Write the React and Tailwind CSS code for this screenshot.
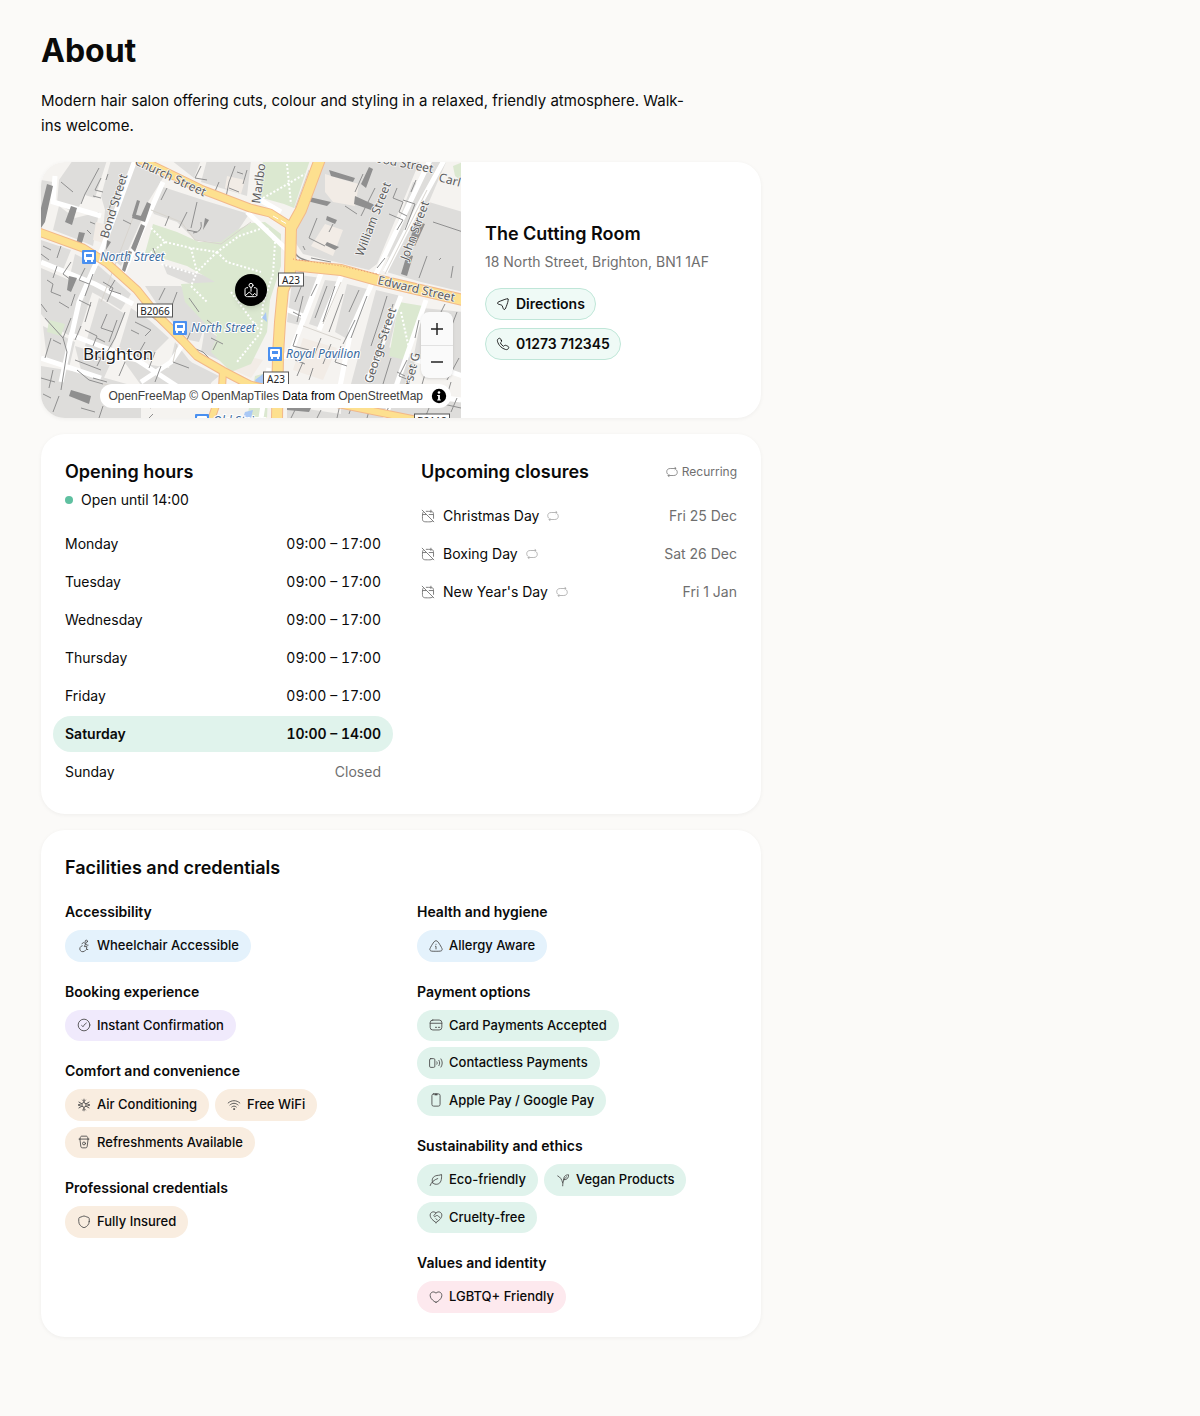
import React from "react";

const ICONS = {
  directions: (
    <path d="M20.6 3.4c-1-1-3.600 0-8.600 1.900-5.800 2.100-9.400 3.500-9.500 5-.1 1.600 2 2.100 4.900 2.900 1.500.4 2.300.7 2.800 1.200s.8 1.300 1.300 2.900c.9 2.800 1.500 4.400 2.900 4.200 1.600-.2 2.800-3.800 4.600-9 1.700-4.800 2.600-8.100 1.600-9.100Z" />
  ),
  phone: (
    <path d="M9.200 5.900 8.600 4.700c-.4-.9-.6-1.400-.9-1.700-.4-.4-1-.7-1.600-.8-.5 0-.9.1-1.700.5C2.700 3.600 2 5.300 2.500 7.300c.9 3.500 2.800 6.700 5.400 9.300 2.400 2.300 5.400 4 8.700 4.900 2 .5 3.800-.2 4.700-1.900.4-.8.5-1.200.5-1.700-.1-.6-.4-1.200-.8-1.600-.4-.3-.9-.5-1.700-.9l-1.200-.6c-1.300-.5-2-.8-2.700-.6-.7.1-1.200.7-2.200 1.800-2.600-1.300-4.500-3.300-5.700-5.900 1.100-.9 1.700-1.400 1.900-2.100.1-.7-.1-1.100-.2-2.100Z" />
  ),
  recurring: (
    <>
      <path d="M18 2.500 20 5l-2 2" />
      <path d="M19 5H8.500C4 5 1.500 7.500 1.500 11.500c0 2.300.8 4 2.500 5.300" />
      <path d="M6 21.500 4 19l2-2" />
      <path d="M5 19h10.500c4.500 0 7-2.500 7-6.500 0-2.300-.8-4-2.500-5.300" />
    </>
  ),
  calendarOff: (
    <>
      <path d="M17 2v4M2 2l20 20" />
      <path d="M9 4h4c4 0 6 0 7.200 1.200C21.500 6.500 21.500 8.500 21.500 12v4M20 20.500C18.500 22 16.500 22 13 22h-2c-4 0-6 0-7.300-1.300S2.500 17.500 2.500 13.500v-1c0-3.500 0-5.600 1.200-7" />
      <path d="M3 9.500h5.500M14 9.500h7" />
    </>
  ),
  wheelchair: (
    <>
      <circle cx="16" cy="4" r="2" />
      <path d="m8.500 8 3-2 3.500 2-2.500 5H17l-1 5h2.500M15 8l1.500 2.500H19" />
      <path d="M9 11.500a5.300 5.300 0 1 0 5.500 8" />
    </>
  ),
  check: (
    <>
      <circle cx="12" cy="12" r="10" />
      <path d="M8 12.800s1.600.9 2.400 2.200c0 0 2.400-4.800 5.600-6.500" />
    </>
  ),
  snow: (
    <>
      <path d="M12 2v6M12 16v6M3.300 7l5.200 3M15.500 14l5.200 3M20.700 7l-5.200 3M8.500 14l-5.200 3" />
      <path d="m9.500 3.500 2.500 2.500 2.500-2.500M9.500 20.500 12 18l2.500 2.500M2.500 11.500 6 10.500M21.500 12.500l-3.500 1M2.500 12.500l3.500 1M21.500 11.500l-3.500-1" />
      <path d="m12 8 3.500 2v4L12 16l-3.500-2v-4Z" />
    </>
  ),
  wifi: (
    <>
      <path d="M2 8.500c6-5.300 14-5.300 20 0M5 12c4.500-4 9.500-4 14 0M8 15.500c2.700-2.300 5.300-2.300 8 0" />
      <circle cx="12" cy="19" r="1" />
    </>
  ),
  cup: (
    <>
      <path d="m5 7 1.500 12c.3 2.300 1 3 3 3h5c2 0 2.700-.7 3-3L19 7" />
      <path d="M3.500 7h17M5 7l.7-2.700C6.200 2.500 7 2 8.500 2h7c1.500 0 2.300.5 2.800 2.300L19 7" />
      <circle cx="12" cy="14.500" r="2.500" />
    </>
  ),
  shield: (
    <path d="M21 11V8.500c0-2 0-3-.5-3.600-.5-.7-1.500-1-3.400-1.500a20 20 0 0 1-2.900-1.100c-2-.8-2.400-.8-4.400 0-.8.4-1.800.8-2.900 1.100-1.900.5-2.900.8-3.400 1.500C3 5.500 3 6.500 3 8.500V11c0 6 4.700 9 7.400 10.200 1.300.6 1.900.6 3.200 0C16.300 20 21 17 21 11Z" />
  ),
  alert: (
    <>
      <path d="M5.500 9.500C8.200 5.200 9.600 3 12 3s3.800 2.200 6.500 6.500l1.500 2.500c2.200 3.800 3.200 5.700 2.200 7.300S18.700 21 13.500 21h-3c-5.200 0-7.700 0-8.700-1.700S1.800 15.800 4 12Z" />
      <path d="M12 17v-4.500h-1M12 9v.200" />
    </>
  ),
  card: (
    <>
      <rect x="2" y="3.500" width="20" height="17" rx="4.500" />
      <path d="M2 9h20M11 16h2M16 16h2.500" />
    </>
  ),
  contactless: (
    <>
      <rect x="1" y="4.500" width="9" height="15" rx="2" />
      <path d="M13.500 10c.7 1.300.7 2.700 0 4M17 7.500c1.800 3 1.800 6 0 9M20.500 5c3 4.500 3 9.500 0 14" />
    </>
  ),
  mobile: (
    <>
      <rect x="5" y="1.500" width="14" height="21" rx="3" />
      <path d="M9.500 2.500h5" strokeWidth="3" strokeLinecap="butt" />
    </>
  ),
  leaf: (
    <>
      <path d="M2 21.500c2-5.500 6-9.500 13-12" />
      <path d="M6.500 17C4.500 13 5 7.500 11 5c3.500-1.500 7-.5 10.500-2.500C22 11 20.500 17.500 15 19c-3.500.9-6.500 0-8.500-2Z" />
    </>
  ),
  sprout: (
    <>
      <path d="M11.500 22c0-6 1-11.500 6.500-15.500M11.500 17C10 11 7.500 7 3 5" />
      <path d="M13.500 11.500c-1-4.500 2-8.500 8-8.500.5 5-2.500 9-8 8.500Z" />
    </>
  ),
  handHeart: (
    <>
      <path d="M12 21.500C7 18 2 14.200 2 8.800 2 3.800 8 1 12 5.300 16 1 22 3.800 22 8.800c0 5.400-5 9.200-10 12.700Z" />
      <path d="m12 5.300-3.500 4c-.8 1 .9 2.700 2.200 1.700L13 9.500c2.500-.5 4 1.500 5.500 3.500M14 17l-2-2" />
    </>
  ),
  heart: (
    <path d="M12 21c-1 0-1.900-.6-3.300-1.600C5 16.600 2 13.500 2 9.300 2 3.700 8 1.200 12 5.500c4-4.300 10-1.800 10 3.800 0 4.200-3 7.300-6.700 10.100C13.900 20.400 13 21 12 21Z" />
  ),
  mapPin: (
    <>
      <path d="M12 14V8" />
      <circle cx="12" cy="5" r="3" />
      <path d="M7 8.500c-3 0-4 .8-4 3V18c0 3 1 4 4 4h10c3 0 4-1 4-4v-6.500c0-2.200-1-3-4-3M3.500 20.500l6-5.500 5 5 3-3 3 3" />
    </>
  ),
};

function Icon({ name, className }) {
  return (
    <svg
      viewBox="0 0 24 24"
      fill="none"
      stroke="currentColor"
      strokeWidth="1.5"
      strokeLinecap="round"
      strokeLinejoin="round"
      aria-hidden="true"
      className={`shrink-0 ${className}`}
    >
      {ICONS[name]}
    </svg>
  );
}

const HOURS = [
  { day: "Monday", time: "09:00 – 17:00" },
  { day: "Tuesday", time: "09:00 – 17:00" },
  { day: "Wednesday", time: "09:00 – 17:00" },
  { day: "Thursday", time: "09:00 – 17:00" },
  { day: "Friday", time: "09:00 – 17:00" },
  { day: "Saturday", time: "10:00 – 14:00", today: true },
  { day: "Sunday", time: "Closed", closed: true },
];

const CLOSURES = [
  { name: "Christmas Day", date: "Fri 25 Dec" },
  { name: "Boxing Day", date: "Sat 26 Dec" },
  { name: "New Year's Day", date: "Fri 1 Jan" },
];

const TONES = {
  blue: "bg-[#e4f2fc]",
  purple: "bg-[#f0eafc]",
  sand: "bg-[#f9ede0]",
  green: "bg-[#e0f3ec]",
  pink: "bg-[#fde9ee]",
};

const FACILITIES = [
  [
    {
      title: "Accessibility",
      tone: "blue",
      items: [["wheelchair", "Wheelchair Accessible"]],
    },
    {
      title: "Booking experience",
      tone: "purple",
      items: [["check", "Instant Confirmation"]],
    },
    {
      title: "Comfort and convenience",
      tone: "sand",
      items: [
        ["snow", "Air Conditioning"],
        ["wifi", "Free WiFi"],
        ["cup", "Refreshments Available"],
      ],
    },
    {
      title: "Professional credentials",
      tone: "sand",
      items: [["shield", "Fully Insured"]],
    },
  ],
  [
    {
      title: "Health and hygiene",
      tone: "blue",
      items: [["alert", "Allergy Aware"]],
    },
    {
      title: "Payment options",
      tone: "green",
      items: [
        ["card", "Card Payments Accepted"],
        ["contactless", "Contactless Payments"],
        ["mobile", "Apple Pay / Google Pay"],
      ],
    },
    {
      title: "Sustainability and ethics",
      tone: "green",
      items: [
        ["leaf", "Eco-friendly"],
        ["sprout", "Vegan Products"],
        ["handHeart", "Cruelty-free"],
      ],
    },
    {
      title: "Values and identity",
      tone: "pink",
      items: [["heart", "LGBTQ+ Friendly"]],
    },
  ],
];

function BusStop({ x, y, label }) {
  return (
    <g>
      <rect x={x - 7} y={y - 7} width="14" height="14" rx="1" fill="#4a90f0" />
      <rect x={x - 5} y={y - 5} width="10" height="8" rx="1" fill="#fff" />
      <rect x={x - 3} y={y - 3} width="6" height="3" fill="#4a90f0" />
      <path d={`M${x - 4} ${y + 4}h2M${x + 2} ${y + 4}h2`} stroke="#fff" strokeWidth="2" />
      <text
        x={x + 11}
        y={y + 4}
        fontSize="12"
        fontStyle="italic"
        fill="#3a6a9e"
        stroke="#fff"
        strokeWidth="2"
        paintOrder="stroke"
      >
        {label}
      </text>
    </g>
  );
}

function RoadShield({ x, y, w, label }) {
  return (
    <g>
      <rect x={x - w / 2} y={y - 7} width={w} height="13" fill="#fff" stroke="#555" />
      <text x={x} y={y + 4} fontSize="10" textAnchor="middle" fill="#222">
        {label}
      </text>
    </g>
  );
}

const YELLOW_ROADS = [
  { d: "M96-4 162 28 209 46 229 51 251 65", w: 7 },
  { d: "M-2 70 42 86 66 101 96 128 116 153 142 179 156 194 182 209 209 223 237 230", w: 7 },
  { d: "M182 209 181 226 170 258", w: 6 },
  { d: "M250 103 300 108 336 118 422 138", w: 10 },
  { d: "M240 232 302 243 376 258", w: 6 },
  { d: "M279-3 260 48 250 66 249 112 242 128 239 160 237 193 236 258", w: 10 },
];

const STREET_LABELS = [
  { text: "Church Street", x: 93, y: 2, r: 25 },
  { text: "Bond Street", x: 67, y: 77, r: -73 },
  { text: "Marlbo", x: 219, y: 42, r: -82 },
  { text: "Edward Street", x: 336, y: 122, r: 13 },
  { text: "William Street", x: 322, y: 95, r: -69 },
  { text: "John Street", x: 367, y: 99, r: -70 },
  { text: "George Street", x: 331, y: 222, r: -72 },
  { text: "Dorset G", x: 367, y: 240, r: -76 },
  { text: "ood Street", x: 334, y: 0, r: 11 },
  { text: "Carl", x: 397, y: 19, r: 15 },
];

function StreetMap() {
  return (
    <svg
      viewBox="0 0 420 256"
      preserveAspectRatio="xMidYMid slice"
      role="img"
      aria-label="Map of Brighton"
      fontFamily='"Noto Sans", sans-serif'
      className="block h-full w-full"
    >
      <rect width="420" height="256" fill="#f5f3f0" />

      {/* city blocks */}
      <path
        fill="#dedddb"
        d="M0 18 12 20 0 66ZM18 18 32-2H66L54 36 44 33 34 52 16 41ZM70-2H92L122 16 107 40 104 50 80 104 60 88 64 48 60 34ZM18 44 34 56 58 50 52 84 38 78 12 68ZM111 48 119 24 165 39 208 52 196 70 180 81 154 78 136 60 113 52ZM130-2H160L153 16ZM166-2H210L206 34 160 20ZM274 4 294-4H380L336 102 328 108 262 92 254 80 259 50 270 32ZM280 34 306 48 294 84 262 74 268 46ZM389-4 406-2 388 40 422 50V130L380 120 342 109ZM372 20 386 24 354 96 344 94ZM0 78 30 88 22 108 0 100ZM34 92 58 104 90 132 80 148 58 134 28 118ZM0 106 52 128 36 178 8 162 0 152ZM58 136 84 152 68 192 44 184ZM90 146 108 158 128 176 108 196 76 192ZM2 164 34 180 28 206 6 198ZM34 184 72 196 62 218 40 208ZM0 204 50 212 100 226V258H0ZM82 198 128 206 134 180 148 198 172 218 160 238 102 226ZM136 188 150 200 178 214 166 224 136 206ZM104 124 140 124 166 158 158 180 148 178 116 142ZM164 166 190 184 182 200 160 190ZM122 102 180 118 178 134 126 112ZM252 112 280 116 262 164 246 160ZM284 118 300 120 280 166 268 162ZM306 122 330 128 308 178 294 170ZM335 128 360 134 338 230 310 222ZM382 146 422 150V214L372 198ZM344 184 376 194 358 240 336 230ZM246 244 300 252V258H246ZM300 234 422 240V258H300Z"
      />
      <path
        fill="#f2ece6"
        d="M284 12 303 18 318 22 314 44 292 40 284 30ZM55 60 70 64 66 82 52 78ZM284 62 302 68 292 94 270 84ZM186 14 204 18 200 32 184 26ZM262 176 296 186 282 218 252 208ZM190 190 222 198 210 216 188 206Z"
      />

      {/* parks */}
      <g fill="#dbe8d0">
        <path d="M112 62 136 70 158 80 180 80 196 68 210 61 224 60 240 72 240 104 229 138 226 170 210 202 190 210 170 190 176 174 144 140 140 122 174 120 146 104 104 91Z" />
        <path d="M222-2H269L253 46 243 42 218 35Z" />
        <path d="M358 140 382 144 364 198 348 194Z" />
        <path d="M8 158 24 162 20 174 6 170ZM412 4 422 0V20L414 14ZM214 214 228 210 226 256 206 256Z" />
      </g>
      <path
        fill="none"
        stroke="#fff"
        strokeWidth="2"
        strokeDasharray="2 2"
        d="M110 66 124 80 150 86 176 90 198 74 222 66M124 80 108 92M176 90 186 100 220 110M150 86 156 110 150 124 166 140M176 90 154 112 120 102M222 36 264 12M246 2 250 42M226 66 234 80 232 112 222 142 220 170 196 200M190 130 218 168M360 150 370 196"
      />
      <path fill="#a9c8f5" d="M221 156 225 150 226 160ZM214 218 222 212 224 220 216 224ZM204 250 212 248 210 256H202Z" />

      {/* side streets */}
      <g fill="none" stroke="#fff" strokeWidth="5">
        <path d="M94-2 60 90 38 140 20 220M122 20 80 116M14 14 12 40 60 54" />
        <path d="M390-4 336 110 310 168 296 240M422-36 380 40 344 110M302 110 278 168M282 106 250 190 240 196" />
        <path d="M385 138 344 256M360 134 326 220M242 146 262 154" />
        <path d="M0 100 54 122 92 142M28 172 96 198 160 240M0 196 60 216" />
        <path d="M206 50 246 88 246 128M216 36 240 50" />
        <path d="M142 182 130 200 100 220M228 206 220 256M370 196 422 214M330 226 420 238" />
      </g>
      <g fill="none" stroke="#d8d4ce" strokeWidth="1">
        <path d="M110 48 140 60 154 78 180 82 210 60M98 40 60 140M62 222 160 238M246 66 250 96 270 104 336 112M136 182 132 200" />
        <path d="M262 164 300 178M254 46 268 8M344 112 386 28M300 120 282 162" />
      </g>

      {/* building shading */}
      <g fill="#8f8f8f">
        <path d="M6 22 12 24 4 60 0 66V46ZM30 44 36 46 31 63 24 60ZM38 70 44 71 40 84 35 82ZM106 40 110 42 104 60 98 58ZM92 52 100 54 98 58 91 56ZM100 62 104 64 94 90 90 86ZM86 88 91 90 84 110 81 108ZM96 38 99 39 94 56 91 54ZM66 78 70 80 65 88ZM164 56 168 58 162 68ZM328 5 332 7 325 26 320 22ZM314 34 336 44 330 48 313 42ZM264 34 290 40 286 44 262 38ZM286 54 296 58 294 62 285 58ZM286 80 298 85 294 88 284 83ZM288 8 314 16 312 20 290 14ZM375 59 384 62 374 84 368 80ZM366 92 372 94 366 114 360 112ZM28 114 36 116 30 130 26 128ZM30 228 50 234 48 242 28 234ZM68 230 92 238 90 244 66 236ZM246 244 270 246 268 250 246 248Z" />
      </g>
      <g fill="none" stroke="#8f8f8f" strokeWidth="1">
        <path d="M58 6 44 32 40 42M67 12 65 18M60 16 54 28 62 30M52 34 60 36M20 20 32 30M49 60 54 62M46 68 50 72M72 34 68 48M79 20 77 30M82 58 90 62M20 84 16 96M2 84 10 88" />
        <path d="M126 26 120 38M146 50 138 66M156 40 150 66M178 20 172 34M194 4 188 20 184 40M206 8 202 22M160 4 154 16 166 18M128 54 124 64M112 86 115 94M196 10 202 12M188 26 198 30" />
        <path d="M270 8 266 20M322 12 314 30M334 26 320 54M276 56 268 76 284 84M292 62 288 70M304 44 316 52M262 84 264 88M270 96 290 100M330 60 318 92M344 96 336 106" />
        <path d="M356 26 352 36 362 40 358 50 366 54M348 52 362 58 356 68M375 18 370 30M362 38 374 42 364 68M386 94 378 116M392 60 422 70M400 96 398 98M412 104 410 116" />
        <path d="M0 92 8 98M6 118 12 122 10 130 20 134M16 104 12 116M30 100 22 112 30 118M44 106 38 118 48 122M52 112 44 134M62 120 72 126 66 140M74 118 68 128 80 132M34 132 30 144M38 138 50 144M18 140 28 146M50 140 44 160M30 156 22 176" />
        <path d="M0 142 6 150M4 156 22 176 26 190 20 228M10 176 4 196M12 178 20 182M40 164 34 178M44 168 56 174 52 184M66 152 60 166 72 170M76 158 68 180M84 150 74 176 66 190M94 160 110 168 104 174M90 168 98 172M104 180 96 194 112 198M114 190 108 206" />
        <path d="M56 176 64 180M48 192 60 196 56 204M74 188 88 192M34 198 60 208M84 200 78 214M36 208 48 218 62 222M12 208 8 226M18 234 12 250M52 216 66 220M0 216 14 220M2 232 10 236M62 244 58 256M40 246 54 250M96 240 110 246M112 252 108 256M120 204 114 220" />
        <path d="M138 180 162 190 178 206M132 200 148 206M124 126 118 138M136 130 130 146M148 136 158 150M152 164 146 178M166 158 176 166M170 176 182 182M176 180 172 188M108 152 122 164M124 142 132 150" />
        <path d="M262 120 254 140M276 122 270 134M252 150 260 154M262 134 256 160M286 124 274 156M294 124 282 160M302 132 288 170M318 128 308 150M326 134 310 176M256 172 252 184 268 188M280 176 272 196M290 182 282 202M262 200 256 214M272 206 268 218M254 198 264 202M300 184 294 200 306 204M314 158 302 182" />
        <path d="M346 134 338 160 330 184M352 142 336 196M342 174 328 216M366 198 358 214 368 218M350 196 342 222M374 202 366 226M356 210 364 214M378 158 374 176M404 142 398 154M416 150 406 176M404 184 398 200M418 196 406 218M384 212 380 226M410 220 404 240M394 224 390 238M416 236 410 250" />
        <path d="M300 238 296 256M312 240 308 252M330 242 326 256M348 244 344 254M254 248 250 256M280 248 276 256M388 246 384 256M402 242 420 246" />
        <path d="M160 60Q162 70 152 71M146 68 156 70" />
      </g>
      <path d="M260 48 252 78Q250 94 264 98L276 102" fill="none" stroke="#8a8a8a" strokeWidth="1.500" />

      {/* main roads */}
      <g fill="none" strokeLinejoin="round">
        {YELLOW_ROADS.map((road) => (
          <path key={road.d} d={road.d} stroke="#f2b88a" strokeWidth={road.w + 2} />
        ))}
        {YELLOW_ROADS.map((road) => (
          <path key={road.d} d={road.d} stroke="#fde08f" strokeWidth={road.w} />
        ))}
        <path d="M232 54 246 62" stroke="#fff" strokeWidth="1" strokeDasharray="6 3" />
        <path d="M252 97 300 104 336 112" stroke="#e89a6a" strokeWidth="1" strokeDasharray="1 2" />
      </g>

      {/* labels */}
      <g fill="#5d5d5d" stroke="#f6f6f6" strokeWidth="1.500" paintOrder="stroke" fontSize="12">
        {STREET_LABELS.map((label) => (
          <text key={label.text} transform={`translate(${label.x} ${label.y}) rotate(${label.r})`}>
            {label.text}
          </text>
        ))}
      </g>
      <BusStop x={48} y={95} label="North Street" />
      <BusStop x={139} y={166} label="North Street" />
      <BusStop x={234} y={192} label="Royal Pavilion" />
      <BusStop x={161} y={259} label="Old Steine" />
      <RoadShield x={250} y={118} w={25} label="A23" />
      <RoadShield x={114} y={149} w={35} label="B2066" />
      <RoadShield x={235} y={217} w={25} label="A23" />
      <RoadShield x={391} y={259} w={35} label="B2118" />
      <text x="42" y="198" fontSize="17" fill="#1a1a1a" stroke="#fff" strokeWidth="2" paintOrder="stroke">
        Brighton
      </text>
    </svg>
  );
}

function MapPanel() {
  return (
    <div className="relative h-64 overflow-hidden">
      <StreetMap />
      <div className="absolute inset-0 flex items-center justify-center">
        <span className="flex h-8 w-8 items-center justify-center rounded-full bg-black text-white shadow-md">
          <Icon name="mapPin" className="h-4 w-4" />
        </span>
      </div>
      <div className="absolute right-2 bottom-10 flex flex-col overflow-hidden rounded-lg bg-[#fafafa] shadow-sm">
        <button aria-label="Zoom in" className="flex h-[33px] w-8 items-center justify-center text-[#222]">
          <svg viewBox="0 0 12 12" className="h-3 w-3" stroke="currentColor" strokeWidth="1.500">
            <path d="M0 6h12M6 0v12" />
          </svg>
        </button>
        <button
          aria-label="Zoom out"
          className="flex h-[33px] w-8 items-center justify-center border-t border-[#e2e2e2] text-[#222]"
        >
          <svg viewBox="0 0 12 12" className="h-3 w-3" stroke="currentColor" strokeWidth="1.500">
            <path d="M0 6h12" />
          </svg>
        </button>
      </div>
      <div className="absolute right-[10px] bottom-[10px] flex h-6 items-center gap-1 rounded-xl bg-white pl-2 font-['Liberation_Sans',sans-serif] text-xs whitespace-nowrap text-black">
        <p>
          <a href="#openfreemap" className="text-[#404040]">OpenFreeMap</a>{" "}
          <a href="#openmaptiles" className="text-[#404040]">© OpenMapTiles</a> Data from{" "}
          <a href="#openstreetmap" className="text-[#404040]">OpenStreetMap</a>
        </p>
        <button aria-label="Toggle attribution" className="flex h-6 w-6 items-center justify-center">
          <svg viewBox="0 0 20 20" className="h-[18px] w-[18px]">
            <circle cx="10" cy="10" r="8" />
            <circle cx="10" cy="6" r="1.400" fill="#fff" />
            <path d="M8 9h3v5h1v1H8v-1h1v-4H8Z" fill="#fff" />
          </svg>
        </button>
      </div>
    </div>
  );
}

function Card({ className = "", children }) {
  return (
    <section className={`rounded-3xl bg-white shadow-[0_1px_4px_rgba(0,0,0,0.05)] ${className}`}>
      {children}
    </section>
  );
}

function CardTitle({ children }) {
  return <h2 className="text-[18px] leading-7 font-semibold">{children}</h2>;
}

function ContactLink({ icon, href, children }) {
  return (
    <a
      href={href}
      className="flex h-8 items-center gap-1.5 rounded-full border border-[#bfe6d8] bg-[#effaf6] px-2.5 text-[14px] leading-5 font-semibold"
    >
      <Icon name={icon} className="h-[14px] w-[14px]" />
      {children}
    </a>
  );
}

function OpeningHours() {
  return (
    <div>
      <CardTitle>Opening hours</CardTitle>
      <p className="mt-1 flex items-center gap-2 text-[14px] leading-5">
        <span className="h-2 w-2 rounded-full bg-[#5fc0a0]" />
        Open until 14:00
      </p>
      <ul className="mt-4 flex flex-col gap-0.5">
        {HOURS.map((row) => (
          <li
            key={row.day}
            className={`-mx-3 flex h-9 items-center justify-between rounded-full px-3 text-[14px] leading-5 ${
              row.today ? "bg-[#e0f3ec] font-semibold" : ""
            }`}
          >
            <span>{row.day}</span>
            <span className={row.closed ? "text-[#6f6f6f]" : "tabular-nums"}>{row.time}</span>
          </li>
        ))}
      </ul>
    </div>
  );
}

function UpcomingClosures() {
  return (
    <div>
      <div className="flex items-center justify-between">
        <CardTitle>Upcoming closures</CardTitle>
        <span className="flex items-center gap-1 text-xs text-[#6f6f6f]">
          <Icon name="recurring" className="h-3 w-3" />
          Recurring
        </span>
      </div>
      <ul className="mt-3 flex flex-col gap-0.5">
        {CLOSURES.map((row) => (
          <li key={row.name} className="flex h-9 items-center text-[14px] leading-5">
            <Icon name="calendarOff" className="mr-2 h-[14px] w-[14px] text-[#6f6f6f]" />
            {row.name}
            <Icon name="recurring" className="ml-2 h-3 w-3 text-[#a0a0a0]" />
            <span className="ml-auto text-[#6f6f6f]">{row.date}</span>
          </li>
        ))}
      </ul>
    </div>
  );
}

function FacilityGroup({ title, tone, items }) {
  return (
    <div>
      <h3 className="text-[14px] leading-5 font-semibold">{title}</h3>
      <ul className="mt-2 flex flex-wrap gap-1.5">
        {items.map(([icon, label]) => (
          <li
            key={label}
            className={`flex items-center gap-1.5 rounded-full px-3 py-1.5 text-[13px] leading-normal font-medium ${TONES[tone]}`}
          >
            <Icon name={icon} className="h-[14px] w-[14px] text-[#4a4a4a]" />
            {label}
          </li>
        ))}
      </ul>
    </div>
  );
}

export default function App() {
  return (
    <div className="min-h-screen bg-[#fbfaf8] px-[41px] py-8 font-[Inter,sans-serif] text-[#0a0a0a]">
      <main className="max-w-[720px]">
        <h1 className="text-[32px] leading-[38px] font-bold">About</h1>
        <p className="mt-[18px] max-w-[660px] text-[15px] leading-[25px]">
          Modern hair salon offering cuts, colour and styling in a relaxed, friendly atmosphere. Walk-ins
          welcome.
        </p>

        <div className="mt-6 flex flex-col gap-4">
          <Card className="grid overflow-hidden sm:grid-cols-[7fr_5fr]">
            <MapPanel />
            <div className="flex flex-col items-start justify-center p-6">
              <CardTitle>The Cutting Room</CardTitle>
              <p className="mt-1 text-[14px] leading-5 text-[#6f6f6f]">
                18 North Street, Brighton, BN1 1AF
              </p>
              <div className="mt-4 flex flex-col items-start gap-2">
                <ContactLink icon="directions" href="#directions">
                  Directions
                </ContactLink>
                <ContactLink icon="phone" href="tel:01273712345">
                  01273 712345
                </ContactLink>
              </div>
            </div>
          </Card>

          <Card className="grid gap-10 p-6 sm:grid-cols-2">
            <OpeningHours />
            <UpcomingClosures />
          </Card>

          <Card className="p-6">
            <CardTitle>Facilities and credentials</CardTitle>
            <div className="mt-5 grid gap-8 sm:grid-cols-2">
              {FACILITIES.map((column) => (
                <div key={column[0].title} className="flex flex-col gap-5">
                  {column.map((group) => (
                    <FacilityGroup key={group.title} {...group} />
                  ))}
                </div>
              ))}
            </div>
          </Card>
        </div>
      </main>
    </div>
  );
}
